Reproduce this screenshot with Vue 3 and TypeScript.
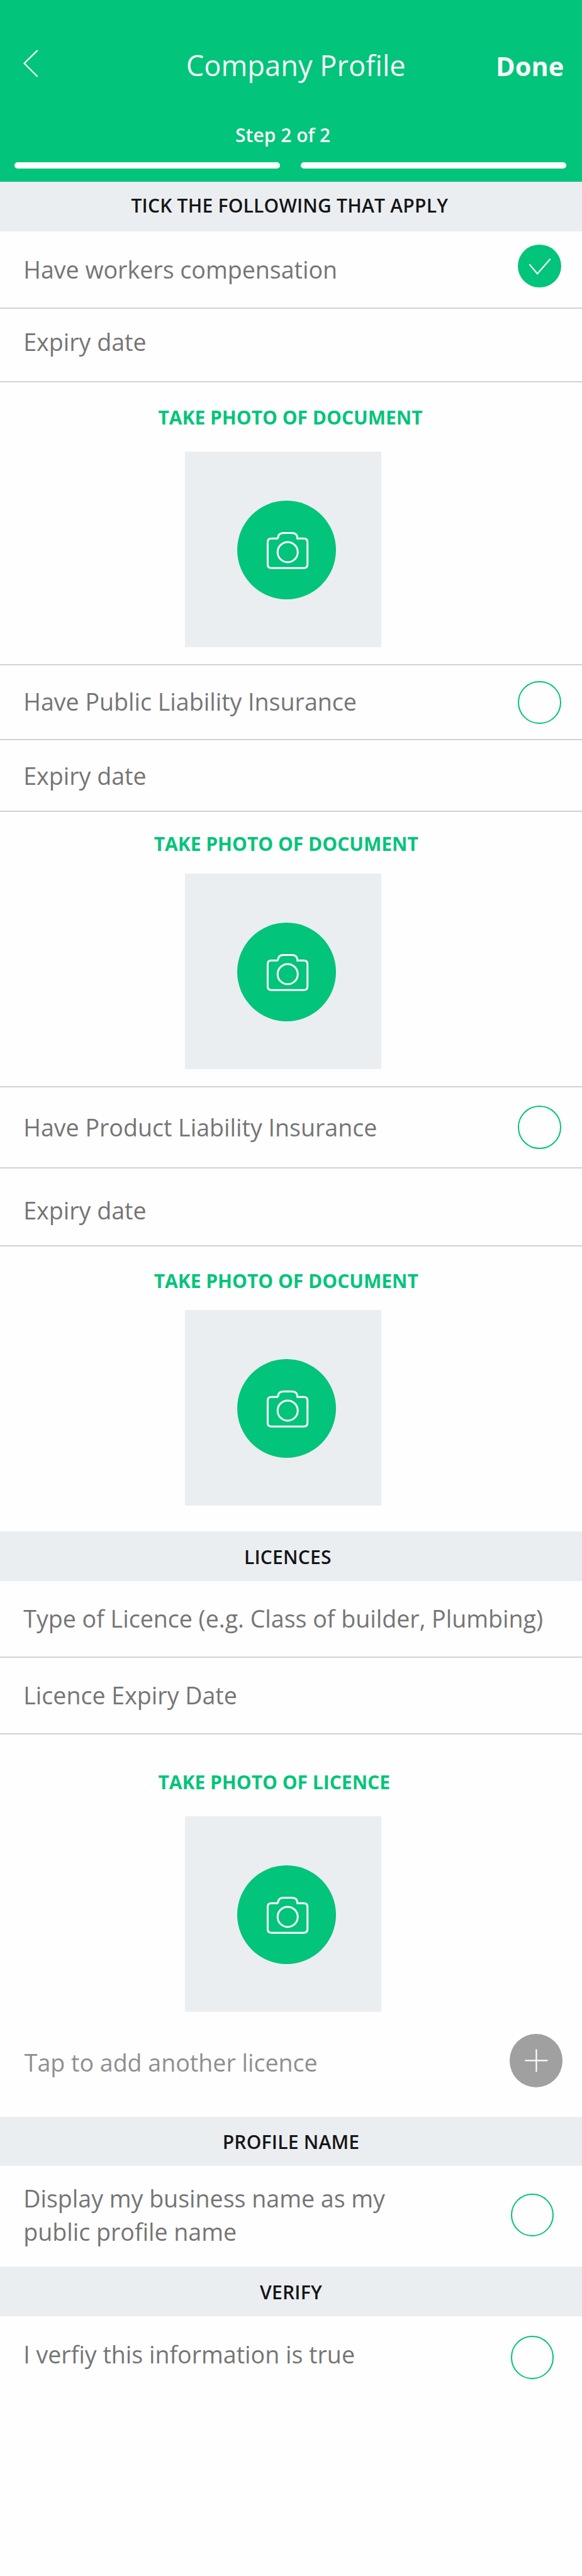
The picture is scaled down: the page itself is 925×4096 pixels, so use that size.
<script setup lang="ts">
import { ref } from 'vue'

interface Cover {
  key: string
  label: string
  checked: boolean
}

const covers = ref<Cover[]>([
  { key: 'workers', label: 'Have workers compensation', checked: true },
  { key: 'public', label: 'Have Public Liability Insurance', checked: false },
  { key: 'product', label: 'Have Product Liability Insurance', checked: false },
])
const useBusinessName = ref(false)
const verified = ref(false)
const steps = [1, 2]
</script>

<template>
  <main class="screen">
    <header class="header">
      <div class="nav">
        <button class="back" aria-label="Back">
          <svg viewBox="0 0 34 62"><path d="M31 3.500 L3.500 30.500 L31 58" /></svg>
        </button>
        <h1 class="title">Company Profile</h1>
        <button class="done">Done</button>
      </div>
      <p class="step">Step 2 of 2</p>
      <div class="progress">
        <span v-for="s in steps" :key="s" class="bar"></span>
      </div>
    </header>

    <h2 class="band band-tick">TICK THE FOLLOWING THAT APPLY</h2>
    <section v-for="cover in covers" :key="cover.key" :class="cover.key">
      <div class="row cover">
        <span class="label">{{ cover.label }}</span>
        <button
          class="toggle"
          :class="{ on: cover.checked }"
          :aria-label="cover.label"
          @click="cover.checked = !cover.checked"
        >
          <svg v-if="cover.checked" viewBox="0 0 92 92"><path d="M25.500 42.800 L41.700 62 L68.700 31.300" /></svg>
        </button>
      </div>
      <div class="row expiry"><span class="label">Expiry date</span></div>
      <div class="photo">
        <h3 class="caption">TAKE PHOTO OF DOCUMENT</h3>
        <div class="drop">
          <button class="camera" aria-label="Take photo of document">
            <svg viewBox="0 0 211 211">
              <path d="M87 81 H73 Q65 81 65 89 V136 Q65 144 73 144 H142 Q150 144 150 136 V89 Q150 81 142 81 H128.500 Q128.500 69 117 69 H98.500 Q87 69 87 81" />
              <circle cx="107.700" cy="110" r="21.500" />
            </svg>
          </button>
        </div>
      </div>
    </section>

    <h2 class="band band-licences">LICENCES</h2>
    <section class="licence">
      <div class="row type"><span class="label">Type of Licence (e.g. Class of builder, Plumbing)</span></div>
      <div class="row expiry"><span class="label">Licence Expiry Date</span></div>
      <div class="photo">
        <h3 class="caption">TAKE PHOTO OF LICENCE</h3>
        <div class="drop">
          <button class="camera" aria-label="Take photo of licence">
            <svg viewBox="0 0 211 211">
              <path d="M87 81 H73 Q65 81 65 89 V136 Q65 144 73 144 H142 Q150 144 150 136 V89 Q150 81 142 81 H128.500 Q128.500 69 117 69 H98.500 Q87 69 87 81" />
              <circle cx="107.700" cy="110" r="21.500" />
            </svg>
          </button>
        </div>
      </div>
      <div class="row add">
        <span class="label">Tap to add another licence</span>
        <button class="plus" aria-label="Add another licence">
          <svg viewBox="0 0 114 114"><path d="M34 57 H80 M57 34 V80" /></svg>
        </button>
      </div>
    </section>

    <h2 class="band">PROFILE NAME</h2>
    <div class="row profile">
      <span class="label">Display my business name as my<br />public profile name</span>
      <button class="toggle" aria-label="Display my business name" @click="useBusinessName = !useBusinessName"></button>
    </div>

    <h2 class="band">VERIFY</h2>
    <div class="row verify">
      <span class="label">I verfiy this information is true</span>
      <button class="toggle" aria-label="Verify" @click="verified = !verified"></button>
    </div>
  </main>
</template>

<style>
body {
  margin: 0;
  background: #fefefe;
}
</style>

<style scoped>
.screen {
  --u: calc(925px / 1242);
  --green: #02c47a;
  --mist: #ebeef1;
  width: calc(1242 * var(--u));
  height: 4096px;
  overflow: hidden;
  background: #fefefe;
  color: #757575;
  font-family: "Open Sans", "Noto Sans", sans-serif;
}
.screen * {
  box-sizing: border-box;
}
h1, h2, h3, p {
  margin: 0;
}
button {
  display: block;
  flex: none;
  margin: 0;
  padding: 0;
  border: 0;
  background: none;
  color: inherit;
  font: inherit;
}
svg {
  display: block;
  width: 100%;
  height: 100%;
  fill: none;
  stroke: #fff;
  stroke-linecap: round;
}

.header {
  height: calc(388 * var(--u));
  padding-top: calc(98 * var(--u));
  background: var(--green);
  color: #f8f8f8;
}
.nav {
  display: flex;
  align-items: flex-start;
  height: calc(162 * var(--u));
}
.back {
  width: calc(34 * var(--u));
  height: calc(62 * var(--u));
  margin: calc(7 * var(--u)) 0 0 calc(48 * var(--u));
}
.back svg {
  stroke-width: 3;
}
.title {
  width: calc(663 * var(--u));
  margin-left: calc(315 * var(--u));
  padding-top: calc(0.600 * var(--u));
  font-size: calc(60.800 * var(--u));
  font-weight: 400;
  line-height: calc(83 * var(--u));
  white-space: nowrap;
}
.done {
  margin-left: calc(-2 * var(--u));
  padding-top: calc(0.600 * var(--u));
  font-size: calc(55.800 * var(--u));
  font-weight: 700;
  line-height: calc(87 * var(--u));
}
.step {
  padding-left: calc(502.300 * var(--u));
  font-size: calc(40.300 * var(--u));
  font-weight: 600;
  line-height: calc(56 * var(--u));
}
.progress {
  display: flex;
  gap: calc(44 * var(--u));
  margin-top: calc(31 * var(--u));
  padding: 0 calc(33 * var(--u)) 0 calc(31 * var(--u));
}
.bar {
  flex: 1;
  height: calc(13 * var(--u));
  border-radius: calc(6.500 * var(--u));
  background: #fff;
}

.band {
  height: calc(106 * var(--u));
  padding-top: calc(26.800 * var(--u));
  background: var(--mist);
  color: #151617;
  font-size: calc(40.300 * var(--u));
  font-weight: 600;
  line-height: calc(56 * var(--u));
  letter-spacing: calc(0.300 * var(--u));
  text-align: center;
}
.band-tick {
  padding-top: calc(22.800 * var(--u));
  padding-right: calc(6 * var(--u));
}
.band-licences {
  padding-right: calc(14 * var(--u));
}

.row {
  display: flex;
  align-items: flex-start;
  justify-content: space-between;
  padding-left: calc(50 * var(--u));
  padding-right: calc(45 * var(--u));
  border-bottom: 2px solid #d2d2d2;
  font-size: calc(50.450 * var(--u));
  line-height: calc(71.600 * var(--u));
  white-space: nowrap;
}
.toggle {
  width: calc(92 * var(--u));
  height: calc(92 * var(--u));
  border: calc(3 * var(--u)) solid var(--green);
  border-radius: 50%;
}
.toggle.on {
  border: 0;
  background: var(--green);
}
.toggle svg {
  stroke-width: 3;
}

.photo {
  overflow: hidden;
}
.caption {
  padding-left: calc(337.600 * var(--u));
  color: var(--green);
  font-size: calc(40.300 * var(--u));
  font-weight: 700;
  line-height: calc(56 * var(--u));
}
.public .caption,
.product .caption {
  padding-left: calc(328.500 * var(--u));
}
.drop {
  width: calc(419 * var(--u));
  height: calc(418 * var(--u));
  margin-left: calc(395 * var(--u));
  padding: calc(105 * var(--u)) 0 0 calc(111 * var(--u));
  background: var(--mist);
}
.camera {
  width: calc(211 * var(--u));
  height: calc(211 * var(--u));
  border-radius: 50%;
  background: var(--green);
}
.camera svg {
  stroke-width: 4;
  stroke-linecap: butt;
}

/* Workers compensation */
.workers .cover {
  height: calc(165 * var(--u));
  padding-top: calc(28 * var(--u));
}
.workers .cover .label {
  margin-top: calc(17.500 * var(--u));
}
.workers .expiry {
  height: calc(158 * var(--u));
  padding-top: calc(35.500 * var(--u));
}
.workers .photo {
  height: calc(603 * var(--u));
  padding-top: calc(46.500 * var(--u));
  border-bottom: 2px solid #d2d2d2;
}
.workers .drop {
  margin-top: calc(44.500 * var(--u));
}

/* Public liability */
.public .cover {
  height: calc(160 * var(--u));
  padding-top: calc(34 * var(--u));
}
.public .cover .label {
  margin-top: calc(8 * var(--u));
}
.public .expiry {
  height: calc(153 * var(--u));
  padding-top: calc(40.500 * var(--u));
}
.public .photo {
  height: calc(589 * var(--u));
  padding-top: calc(41 * var(--u));
  border-bottom: 2px solid #d2d2d2;
}
.public .drop {
  margin-top: calc(35 * var(--u));
}

/* Product liability */
.product .cover {
  height: calc(173 * var(--u));
  padding-top: calc(39 * var(--u));
}
.product .cover .label {
  margin-top: calc(10.500 * var(--u));
}
.product .expiry {
  height: calc(166 * var(--u));
  padding-top: calc(53.500 * var(--u));
}
.product .photo {
  height: calc(608 * var(--u));
  padding-top: calc(45.500 * var(--u));
}
.product .drop {
  margin-top: calc(34.500 * var(--u));
}

/* Licences */
.licence .type {
  height: calc(165 * var(--u));
  padding-top: calc(45.500 * var(--u));
}
.licence .expiry {
  height: calc(163 * var(--u));
  padding-top: calc(43.500 * var(--u));
}
.licence .photo {
  height: calc(593 * var(--u));
  padding-top: calc(74.500 * var(--u));
}
.licence .drop {
  margin-top: calc(44.500 * var(--u));
}
.licence .add {
  height: calc(223 * var(--u));
  padding: calc(47 * var(--u)) calc(41 * var(--u)) 0 calc(52 * var(--u));
  border: 0;
  color: #8f8f8f;
}
.add .label {
  margin-top: calc(25.500 * var(--u));
}
.plus {
  width: calc(114 * var(--u));
  height: calc(114 * var(--u));
  border-radius: 50%;
  background: #a0a0a0;
}
.plus svg {
  stroke-width: 3;
}

/* Profile name and verification */
.profile,
.verify {
  padding-right: calc(60 * var(--u));
  border: 0;
}
.profile {
  height: calc(214 * var(--u));
  padding-top: calc(33.500 * var(--u));
  line-height: calc(70 * var(--u));
}
.profile .label {
  margin-top: calc(1.500 * var(--u));
}
.profile .toggle {
  margin-top: calc(24.500 * var(--u));
}
.verify {
  padding-top: calc(42 * var(--u));
}
.verify .label {
  margin-top: calc(3.500 * var(--u));
}
</style>
